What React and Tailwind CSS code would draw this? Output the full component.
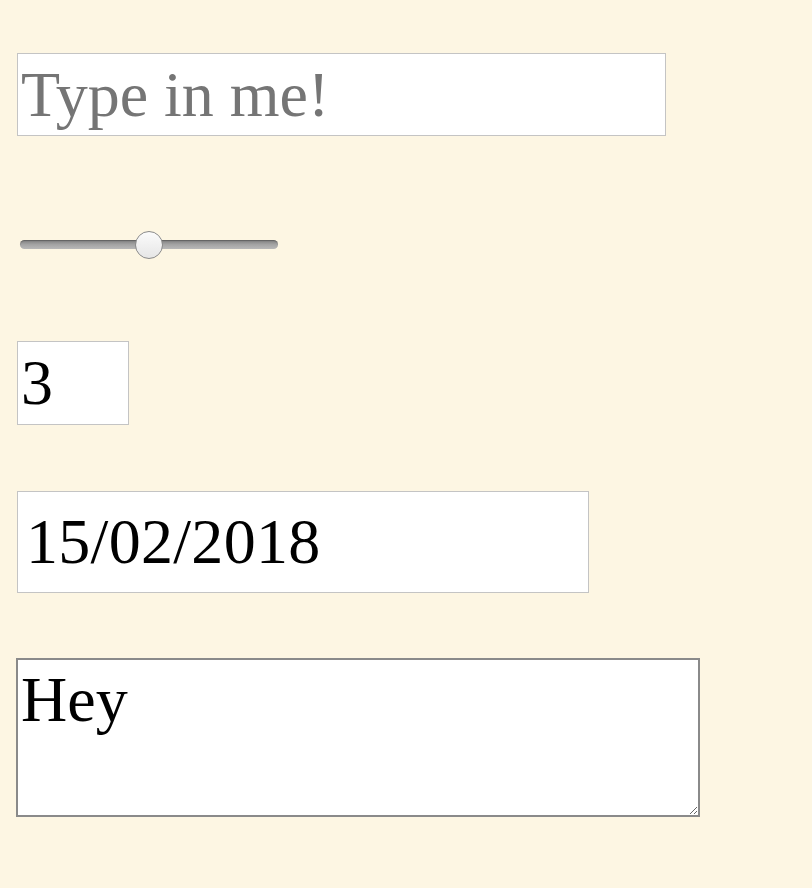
import { useState } from "react";

function Slider({ value }) {
  // value between 0 and 1
  return (
    <div className="relative w-[258px] h-[28px] ml-[3px]">
      <div className="absolute left-0 right-0 top-[9px] h-[9px] rounded-full bg-gradient-to-b from-[#7e7e7e] via-[#a3a3a3] to-[#b8b8b8] shadow-[inset_0_1px_1px_rgba(0,0,0,0.25)]" />
      <div
        className="absolute top-0 w-[28px] h-[28px] rounded-full border-[1.5px] border-[#8a8a8a] bg-gradient-to-b from-[#fbfbfb] to-[#e6e6e6]"
        style={{ left: `calc(${value * 100}% - 14px)` }}
      />
    </div>
  );
}

export default function App() {
  const [text, setText] = useState("");
  const [num, setNum] = useState("3");
  const [date, setDate] = useState("15/02/2018");
  const [note, setNote] = useState("Hey");

  return (
    <div className="min-h-screen bg-[#fdf6e3] font-['Liberation_Serif','Times_New_Roman',serif] text-black">
      <div className="flex flex-col items-start pl-[17px] pt-[53px]">
        <input
          type="text"
          value={text}
          onChange={(e) => setText(e.target.value)}
          placeholder="Type in me!"
          className="w-[649px] h-[83px] px-[3px] bg-white border border-[#c4c4c4] text-[64px] leading-normal outline-none placeholder:text-[#757575]"
        />

        <div className="mt-[95px]">
          <Slider value={0.5} />
        </div>

        <input
          type="number"
          value={num}
          onChange={(e) => setNum(e.target.value)}
          className="mt-[82px] w-[112px] h-[84px] px-[3px] bg-white border border-[#c4c4c4] text-[64px] leading-normal outline-none [appearance:textfield] [&::-webkit-inner-spin-button]:appearance-none [&::-webkit-outer-spin-button]:appearance-none"
        />

        <input
          type="text"
          value={date}
          onChange={(e) => setDate(e.target.value)}
          className="mt-[66px] w-[572px] h-[102px] pl-[8px] pr-[3px] bg-white border border-[#c4c4c4] text-[64px] leading-normal tracking-[0.3px] outline-none"
        />

        <textarea
          value={note}
          onChange={(e) => setNote(e.target.value)}
          className="mt-[65px] -ml-px w-[684px] h-[159px] pl-[3px] pt-[10px] bg-white border-2 border-[#8a8a8a] text-[64px] leading-[60px] outline-none resize"
        />
      </div>
    </div>
  );
}
